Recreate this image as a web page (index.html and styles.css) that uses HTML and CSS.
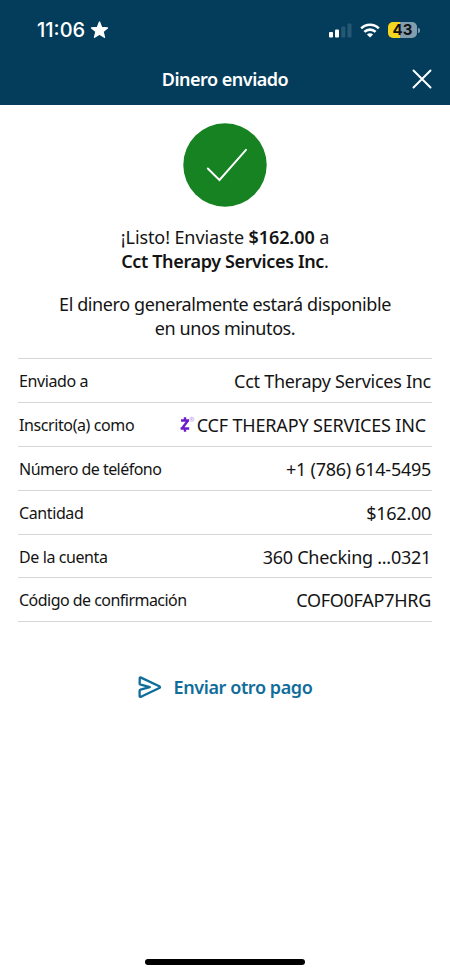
FILE: index.html
```
<!DOCTYPE html>
<html lang="es">
<head>
  <meta charset="UTF-8" />
  <meta name="viewport" content="width=device-width, initial-scale=1.0"/>
  <title>Dinero enviado</title>
  <link rel="stylesheet" href="styles.css">
</head>
<body>
  <header>
    <div class="status-bar">
      <div class="clock">
        <span class="time">11:06</span>
        <svg width="19" height="18" viewBox="0 0 18 18">
          <path d="M9 1 L11.2 6.4 L17 6.9 L12.6 10.6 L14 16.3 L9 13.2 L4 16.3 L5.4 10.6 L1 6.9 L6.8 6.4 Z" fill="#fff" stroke="#fff" stroke-width="1.3" stroke-linejoin="round"/>
        </svg>
      </div>
      <div class="indicators">
        <svg class="signal" width="23" height="15" viewBox="0 0 23 15">
          <rect x="0" y="9" width="4" height="5.5" rx="1" fill="#fff"/>
          <rect x="6" y="6.5" width="4" height="8" rx="1" fill="#fff"/>
          <rect x="12.3" y="3.5" width="4" height="11" rx="1" fill="#265873"/>
          <rect x="18.5" y="0.5" width="4" height="14" rx="1" fill="#265873"/>
        </svg>
        <svg class="wifi" width="20" height="15" viewBox="0 0 20 15">
          <g fill="none" stroke="#fff" stroke-width="2.6">
            <path d="M1.2 5.4 A12.6 12.6 0 0 1 18.8 5.4"/>
            <path d="M4.4 8.9 A8 8 0 0 1 15.6 8.9"/>
          </g>
          <path d="M10 14.4 L6.9 11.5 A4.4 4.4 0 0 1 13.1 11.5 Z" fill="#fff"/>
        </svg>
        <div class="battery">43</div>
        <div class="battery-cap"></div>
      </div>
    </div>
    <div class="title-bar">
      <h1>Dinero enviado</h1>
      <button class="close" aria-label="Cerrar">
        <svg width="20" height="20" viewBox="0 0 20 20">
          <path d="M1.5 1.5 L18.5 18.5 M18.5 1.5 L1.5 18.5" stroke="#fff" stroke-width="2" stroke-linecap="round"/>
        </svg>
      </button>
    </div>
  </header>

  <main>
    <svg class="check" width="84" height="84" viewBox="0 0 84 84">
      <circle cx="42" cy="42" r="41.7" fill="#168221"/>
      <path d="M24.8 45.5 L36.5 57 L63 26.8" fill="none" stroke="#fff" stroke-width="1.9" stroke-linecap="round"/>
    </svg>

    <p class="summary">¡Listo! Enviaste <b>$162.00</b> a<br><b class="recipient">Cct Therapy Services Inc</b>.</p>
    <p class="note">El dinero generalmente estará disponible<br>en unos minutos.</p>

    <dl class="details">
      <div class="row">
        <dt>Enviado a</dt>
        <dd>Cct Therapy Services Inc</dd>
      </div>
      <div class="row">
        <dt>Inscrito(a) como</dt>
        <dd class="enrolled">
          <svg width="16" height="17" viewBox="0 0 16 17">
            <path d="M2 4.5 H10 M9 4.6 L3 12.4 M1.6 12.5 H10.2 M6 1.3 V4 M6 12.5 V15.8" fill="none" stroke="#6c1cc9" stroke-width="2.4"/>
            <circle cx="12.9" cy="3.2" r="2.1" fill="none" stroke="#b99ade" stroke-width="0.6"/>
            <path d="M12.3 4.4 V2.1 H13.1 Q13.7 2.7 13.1 3.2 H12.3 M13 3.2 L13.7 4.4" fill="none" stroke="#b99ade" stroke-width="0.5"/>
          </svg>
          <span>CCF THERAPY SERVICES INC</span>
        </dd>
      </div>
      <div class="row">
        <dt class="long">Número de teléfono</dt>
        <dd>+1 (786) 614-5495</dd>
      </div>
      <div class="row">
        <dt>Cantidad</dt>
        <dd>$162.00</dd>
      </div>
      <div class="row">
        <dt>De la cuenta</dt>
        <dd>360 Checking ...0321</dd>
      </div>
      <div class="row">
        <dt class="long">Código de confirmación</dt>
        <dd>COFO0FAP7HRG</dd>
      </div>
    </dl>

    <button class="send-again">
      <svg width="24" height="23" viewBox="0 0 24 23">
        <path d="M1.8 1.8 Q2.2 1.3 3 1.6 L21.3 10.2 Q22.8 11.2 21.3 12 L3 20.8 Q1.6 21.2 1.6 20 V14.6 Q1.7 13.8 2.5 13.6 L11.8 11.2 L2.8 8.7 Q1.6 8.3 1.6 7.4 Z" fill="none" stroke="#106d9a" stroke-width="2.3" stroke-linejoin="round"/>
      </svg>
      <span>Enviar otro pago</span>
    </button>
  </main>

  <div class="home-indicator"></div>
</body>
</html>
```
FILE: styles.css
```
* {
  box-sizing: border-box;
}
body {
  margin: 0;
  height: 974px;
  display: flex;
  flex-direction: column;
  align-items: center;
  overflow: hidden;
  font-family: "Noto Sans", sans-serif;
  background-color: #fff;
  color: #141414;
}
header {
  width: 100%;
  height: 105px;
  background-color: #033d5b;
  color: #fff;
}
.status-bar {
  display: flex;
  justify-content: space-between;
  align-items: center;
  height: 60px;
  padding: 0 30px 0 37px;
  font-family: Inter, sans-serif;
}
.clock {
  display: flex;
  align-items: center;
  gap: 5px;
}
.time {
  font-size: 20px;
  font-weight: 500;
  letter-spacing: 0;
}
.indicators {
  display: flex;
  align-items: center;
}
.wifi {
  margin: 0 8px;
}
.battery {
  width: 29px;
  height: 16px;
  border-radius: 5px;
  background: linear-gradient(to right, #f6d51f 43%, #829eae 43%);
  color: #111;
  font-size: 15px;
  font-weight: 700;
  line-height: 16px;
  text-align: center;
}
.battery-cap {
  width: 2px;
  height: 5px;
  margin-left: 1px;
  border-radius: 0 2px 2px 0;
  background-color: #829eae;
}
.title-bar {
  display: grid;
  grid-template-columns: 1fr auto 1fr;
  align-items: center;
  height: 38px;
  padding: 0 18px;
}
h1 {
  grid-column: 2;
  margin: 0;
  font-size: 18px;
  font-weight: 600;
  letter-spacing: -0.5px;
}
button {
  padding: 0;
  border: none;
  background: none;
  font-family: inherit;
  cursor: pointer;
}
.close {
  justify-self: end;
  height: 20px;
}
.close svg {
  display: block;
}
main {
  display: flex;
  flex: 1;
  flex-direction: column;
  align-items: center;
  width: 100%;
  padding: 18px 18px 0;
}
p {
  margin: 0;
  font-size: 18px;
  line-height: 24px;
  text-align: center;
}
.summary {
  margin-top: 18px;
  letter-spacing: -0.1px;
}
.summary b {
  font-weight: 600;
}
.summary .recipient {
  letter-spacing: -0.37px;
}
.note {
  margin-top: 19px;
  letter-spacing: -0.4px;
}
.details {
  width: 100%;
  margin: 18px 0 0;
  border-top: 1px solid #d6d6d6;
}
.row {
  display: flex;
  justify-content: space-between;
  align-items: center;
  height: 43.9px;
  padding: 1px 1px 0;
  border-bottom: 1px solid #d6d6d6;
}
dt {
  font-size: 16px;
  letter-spacing: -0.4px;
}
dt.long {
  letter-spacing: -0.53px;
}
dd {
  margin: 0;
  font-size: 18px;
  letter-spacing: -0.27px;
}
.enrolled {
  display: flex;
  align-items: center;
  gap: 2px;
  padding-right: 5px;
  letter-spacing: -0.17px;
}
.send-again {
  display: flex;
  align-items: center;
  gap: 12px;
  margin-top: 53px;
  color: #106d9a;
  font-size: 18px;
  font-weight: 600;
  letter-spacing: -0.4px;
}
.home-indicator {
  width: 160px;
  height: 6px;
  margin-bottom: 9px;
  border-radius: 3px;
  background-color: #000;
}
```
